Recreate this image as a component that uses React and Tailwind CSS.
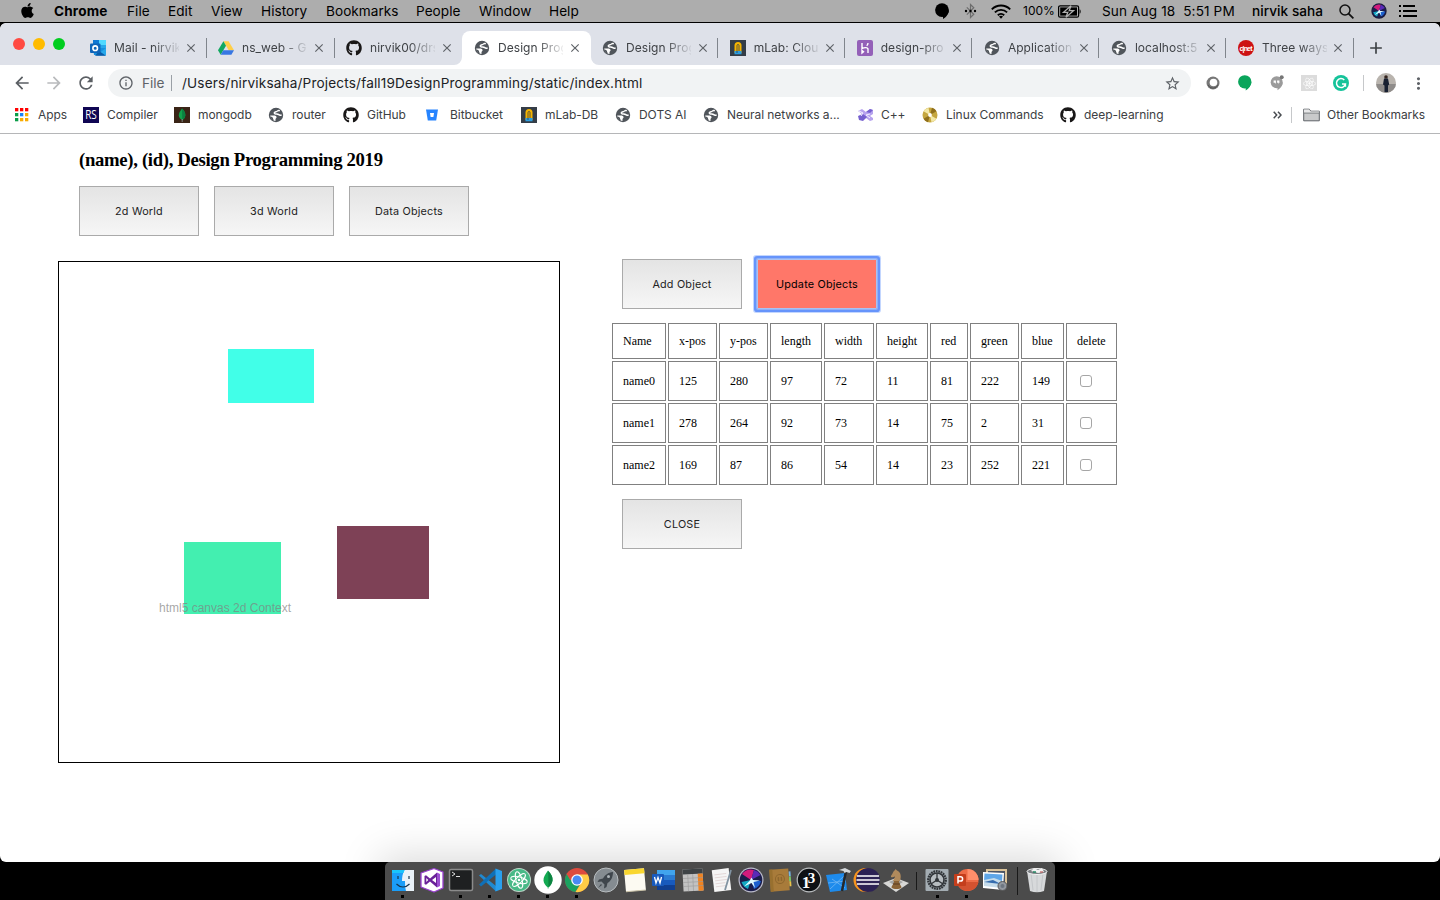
import React from "react";
import { FaApple, FaGithub, FaReact } from "react-icons/fa";
import { MdStarBorder, MdArrowBack, MdArrowForward, MdRefresh, MdInfoOutline, MdClose, MdAdd, MdMoreVert } from "react-icons/md";

const sans = "font-['Inter','Liberation_Sans',sans-serif]";
const serif = "font-['Liberation_Serif',serif]";

/* ---------- small icons ---------- */
const Globe = () => (
  <svg width="16" height="16" viewBox="0 0 16 16">
    <circle cx="8" cy="8" r="7.200" fill="#50555b" />
    <path d="M11.800 3.700C9.800 2.800 9.700 4.500 8 4.700c-1.600.2-2.300 1.500-1 2.100 1.500.5 2.700-.2 3.700.8.700.8 1.800.7 2.900.4" stroke="#fff" strokeWidth="1.500" fill="none" />
    <path d="M2.200 8.600h3.400c1.800 0 3 .5 3 1.700 0 1-1.100 1-1.100 2v1.800A6.200 6.200 0 0 1 2.200 8.600z" fill="#fff" />
    <path d="M1.800 9.900c1.500-.2 2.900.2 3.100 1.100.2.800 1 1.700.6 3.400z" fill="#50555b" />
  </svg>
);
const Outlook = () => (
  <svg width="16" height="16" viewBox="0 0 16 16">
    <path d="M4 0h11a1 1 0 0 1 1 1v7H3V1a1 1 0 0 1 1-1z" fill="#28a8ea" />
    <path d="M9 0h7v5H9z" fill="#50d9ff" /><path d="M3 0h6v5H3z" fill="#0f78d4" />
    <path d="M3 8h13v7H4z" fill="#1490df" /><path d="M16 8v7.500H6z" fill="#28a8ea" /><path d="m9 11 7 4.700H5z" fill="#0a5ba8" />
    <rect y="3.500" width="10.500" height="9.500" rx="1" fill="#0f64b8" /><circle cx="5.200" cy="8.200" r="2.300" fill="none" stroke="#fff" strokeWidth="1.600" />
  </svg>
);
const Drive = () => (
  <svg width="16" height="16" viewBox="0 0 16 16">
    <path d="M5.400 1.200h5.200L16 10.200h-5.300z" fill="#ffcf48" /><path d="M5.400 1.200 8 5.700 2.700 14.800 0 10.200z" fill="#11a861" /><path d="M5.300 10.200H16l-2.600 4.600H2.700z" fill="#3777e3" />
  </svg>
);
const MLab = () => (
  <svg width="16" height="16" viewBox="0 0 16 16">
    <path fill="#343d47" d="M0 0h16v16H0z" /><path d="M4.500 13V5.500a3.500 3.500 0 0 1 7 0V13z" fill="#f5b400" /><path d="M4.500 11h7v3.300h-7z" fill="#2d9ee0" /><path d="M7 13V5.500a1 1 0 0 1 2 0V11" stroke="#343d47" strokeWidth=".8" fill="none" />
  </svg>
);
const Heroku = () => (
  <svg width="16" height="16" viewBox="0 0 16 16">
    <rect width="16" height="16" rx="2" fill="#9460b8" /><path d="M5 3v5.500c2-1 6-1.500 6 .8V13M5 10.500V13l1.500-1.200zM11 3c0 1-.5 2-1.300 2.700" stroke="#fff" strokeWidth="1.400" fill="none" />
  </svg>
);
const Cnet = () => (
  <svg width="16" height="16" viewBox="0 0 16 16">
    <circle cx="8" cy="8" r="8" fill="#cd1212" /><text x="8" y="10.500" fontSize="7" textAnchor="middle" fill="#fff" fontFamily="Liberation Sans" fontWeight="700" textLength="13">c|net</text>
  </svg>
);
const Apps = () => (
  <svg width="14" height="14" viewBox="0 0 14 14">
    {["#f00", "#f00", "#f00", "#0a9d48", "#1a82f7", "#f9ab00", "#0a9d48", "#f9ab00", "#f9ab00"].map((c, i) => (
      <rect key={i} x={(i % 3) * 5} y={Math.floor(i / 3) * 5} width="3.300" height="3.300" fill={c} />
    ))}
  </svg>
);
const RS = () => (
  <svg width="16" height="16" viewBox="0 0 16 16"><path fill="#100653" d="M0 0h16v16H0z" /><text x="8" y="12.200" fontSize="12" textAnchor="middle" fill="#fff" fontFamily="Open Sans" textLength="11.500" lengthAdjust="spacingAndGlyphs">RS</text></svg>
);
const MongoSm = () => (
  <svg width="16" height="16" viewBox="0 0 16 16"><path fill="#3a2416" d="M0 0h16v16H0z" /><path d="M8 1.500c2.500 2.500 3.500 4.500 3.300 7-.2 2-1.500 3.500-3 4.500-2-1-3.400-2.600-3.500-4.600C4.700 6 6 4.200 8 1.500z" fill="#12a14b" /><path d="M8 1.500c2.500 2.500 3.500 4.500 3.300 7-.2 2-1.500 3.500-3 4.500z" fill="#0b8040" /><path d="M8.200 12v3" stroke="#9aa" strokeWidth=".7" /></svg>
);
const Bitbucket = () => (
  <svg width="14" height="14" viewBox="0 0 14 14"><path d="M1 1.500h12l-1.800 11H2.800z" fill="#2684ff" /><path d="M5 5h4l-.6 4H5.600z" fill="#fff" /></svg>
);
const Cpp = () => (
  <svg width="17" height="16" viewBox="0 0 17 16"><path d="m1 4 4-2 4 3 4-3 3 1v4l-3 2 3 2v2l-3 1-4-3-4 2-3-1V9l3-2z" fill="#b7a3ee" /><path d="m1 9 5-2 4 3-4 4-4-1zM9 5l4-3 3 1-3 3z" fill="#7660cf" /><path d="m2 4 4 2-2 3m9-2-4 1 4 3" stroke="#f3efff" fill="none" /></svg>
);
const Disc = () => (
  <svg width="16" height="16" viewBox="0 0 16 16"><circle cx="8" cy="8" r="7.500" fill="#c5a63f" /><path d="M8 8 1.500 4.200A7.500 7.500 0 0 1 6.500.7zM8 8l6.500 3.800a7.500 7.500 0 0 1-5 3.500z" fill="#f3e8a6" /><path d="M8 8 10 .8a7.500 7.500 0 0 1 4.500 3.500zM8 8 6 15.200a7.500 7.500 0 0 1-4.500-3.500z" fill="#8f6f1c" /><circle cx="8" cy="8" r="1.900" fill="#fff" /></svg>
);
const Folder = () => (
  <svg width="17" height="14" viewBox="0 0 17 14"><path d="M.7 12.800V1.200h5.600l1.500 2h8.500v9.600z" fill="#c9cacb" stroke="#5f6368" /><path d="M1 4.800h15V3.600H7.500l-1.400-2H1z" fill="#e7e7e8" /><path d="M1 5.100h15" stroke="#5f6368" strokeWidth=".7" /></svg>
);
const Bubble = ({ size = 14, fill = "#000" }) => (
  <svg width={size} height={size * 1.15} viewBox="0 0 14 16"><circle cx="7" cy="7" r="6.900" fill={fill} /><path d="M13.900 7c0 4-2.900 7.300-5.900 9v-2.500l-1-.5z" fill={fill} /></svg>
);
const Bluetooth = () => (
  <svg width="13" height="16" viewBox="0 0 13 16"><path d="m2.800 4.300 7 7L6.500 14.500v-13l3.300 3.200-7 7" stroke="#6d6d6d" strokeWidth="1.200" fill="none" /><circle cx="2" cy="8" r="1.200" /><circle cx="6.500" cy="8" r="1.200" /><circle cx="11" cy="8" r="1.200" /></svg>
);
const Wifi = () => (
  <svg width="20" height="15" viewBox="0 0 20 15" fill="none" stroke="#000" strokeWidth="1.900"><path d="M.8 5.300a13 13 0 0 1 18.400 0M3.900 8.400a8.700 8.700 0 0 1 12.200 0M6.800 11.200a4.700 4.700 0 0 1 6.400 0" /><path d="m10 14.800-2-2.200a3 3 0 0 1 4 0z" fill="#000" stroke="none" /></svg>
);
const Battery = () => (
  <svg width="24" height="13" viewBox="0 0 24 13"><rect x=".6" y=".8" width="20" height="11.400" rx="1.500" fill="none" stroke="#000" strokeWidth="1.200" /><path d="M2.200 2.400h16.800v8.200H2.200z" /><path d="M21.600 4.200c1.400.4 1.400 4.200 0 4.600z" /><path d="m13 .8-7.500 6.500h4.300L8 12.200l7.500-6.500h-4.300z" fill="#000" stroke="#b0b0b0" strokeWidth="1.300" /></svg>
);
const SiriArt = ({ size, rim = "#bcbccb" }) => (
  <svg width={size} height={size} viewBox="0 0 26 26">
    <circle cx="13" cy="13" r="12.500" fill={rim} /><circle cx="13" cy="13" r="11.300" fill="#1b1d4a" />
    <path d="M13 13 4 7a11 11 0 0 1 12-4z" fill="#d21b7c" /><path d="m13 13 3-10a11 11 0 0 1 6.500 5z" fill="#5a2ab8" /><path d="m13 13 10 1A11 11 0 0 1 16 22z" fill="#1a5fcf" /><path d="M13 13 3.500 15A11 11 0 0 0 10 22z" fill="#12a9c4" />
    <path d="m13.500 10.500 1.500 2.500 7 .5-6.500 1.500 1.500 6-3.500-5-7.500 3.500 5.500-5.500z" fill="#dffbff" />
  </svg>
);
const List = () => (
  <svg width="19" height="12" viewBox="0 0 19 12" stroke="#000" strokeWidth="2"><path d="M0 1h2M0 6h2M0 11h2M4 1h12M4 6h14M4 11h14" /></svg>
);

/* ---------- menu bar ---------- */
function MenuBar() {
  const items = [["File", "w-[41px]"], ["Edit", "w-[43px]"], ["View", "w-[50px]"], ["History", "w-[65px]"], ["Bookmarks", "w-[90px]"], ["People", "w-[63px]"], ["Window", "w-[70px]"], ["Help", "w-[40px]"]];
  return (
    <div className={`flex h-[23px] shrink-0 items-center whitespace-nowrap border-b border-black bg-[#adadad] pl-[20px] text-[13.600px] text-black ${sans}`}>
      <FaApple className="mb-[2px] h-[17px] w-[15px]" />
      <span className="ml-[19px] w-[73px] font-bold tracking-[0.150px]">Chrome</span>
      {items.map(([t, w]) => <span key={t} className={`${w} tracking-[0.040px]`}>{t}</span>)}
      <div className="ml-[346px] flex w-[29px]"><Bubble size={14} /></div>
      <div className="flex w-[27px]"><Bluetooth /></div>
      <div className="flex w-[32px]"><Wifi /></div>
      <span className="w-[35px] text-[12px]">100%</span>
      <div className="w-[44px]"><Battery /></div>
      <span className="w-[150px] whitespace-pre tracking-[0.120px]">Sun Aug 18  5:51 PM</span>
      <span className="w-[87px] font-medium tracking-[0.050px]">nirvik saha</span>
      <svg width="15" height="15" viewBox="0 0 15 15" fill="none" stroke="#111" strokeWidth="1.500"><circle cx="6" cy="6" r="5" /><path d="m9.600 9.600 4.800 4.800" strokeWidth="1.800" /></svg>
      <div className="ml-[17px]"><SiriArt size={16} rim="#1b1d3a" /></div>
      <div className="ml-[12px]"><List /></div>
    </div>
  );
}

/* ---------- tab strip ---------- */
function Tab({ icon, title, active, sep, w = "w-[127.200px]" }) {
  return (
    <div className={`relative flex h-[34px] shrink-0 items-center ${w} ${active ? "ml-[-1px] rounded-t-[8px] bg-white pl-[12.500px]" : "pl-[11.500px]"}`}>
      {active && <svg className="absolute bottom-0 left-[-8px]" width="8" height="8"><path d="M8 0v8H0a8 8 0 0 0 8-8z" fill="#fff" /></svg>}
      {active && <svg className="absolute bottom-0 right-[-8px]" width="8" height="8"><path d="M0 0v8h8a8 8 0 0 1-8-8z" fill="#fff" /></svg>}
      <span className="flex h-4 w-4 shrink-0 items-center">{icon}</span>
      <span className="ml-[8px] w-[65px] shrink-0 whitespace-nowrap text-[12px] tracking-[0.050px] text-[#3f4246] [mask-image:linear-gradient(to_right,#000_60%,transparent_104%)]">{title}</span>
      <MdClose className="ml-[4.500px] h-[14px] w-[14px] shrink-0 text-[#5f6368]" />
      {sep && <span className="absolute right-0 top-[7px] h-[20px] w-px bg-[#80858c]" />}
    </div>
  );
}
function TabStrip() {
  return (
    <div className="flex h-[42px] items-end rounded-t-[6px] bg-[#dee1e9]">
      <div className="mb-[15px] ml-[13px] flex w-[65.500px] gap-[8px]">
        <span className="h-3 w-3 rounded-full bg-[#ff4a42]" /><span className="h-3 w-3 rounded-full bg-[#ffbb00]" /><span className="h-3 w-3 rounded-full bg-[#00cd1f]" />
      </div>
      <Tab w="w-[128px]" icon={<Outlook />} title="Mail - nirvik" sep />
      <Tab w="w-[128px]" icon={<Drive />} title="ns_web - G" sep />
      <Tab w="w-[128px]" icon={<FaGithub className="h-4 w-4 text-[#191717]" />} title="nirvik00/drs" />
      <Tab w="w-[129px]" icon={<Globe />} title="Design Prog" active />
      <Tab w="w-[127.700px]" icon={<Globe />} title="Design Prog" sep />
      <Tab w="w-[127px]" icon={<MLab />} title="mLab: Clou" sep />
      <Tab icon={<Heroku />} title="design-pro" sep />
      <Tab w="w-[127px]" icon={<Globe />} title="Application" sep />
      <Tab w="w-[127px]" icon={<Globe />} title="localhost:5" sep />
      <Tab icon={<Cnet />} title="Three ways" sep />
      <MdAdd className="mb-[7px] ml-[12.500px] h-[20px] w-[20px] text-[#3c4043]" />
    </div>
  );
}

/* ---------- toolbar ---------- */
function Toolbar() {
  return (
    <div className={`flex h-[36px] items-center pl-[12px] ${sans}`}>
      <MdArrowBack className="h-5 w-5 text-[#5b5f64]" />
      <MdArrowForward className="ml-[12px] h-5 w-5 text-[#b9bbbd]" />
      <MdRefresh className="ml-[12px] h-5 w-5 text-[#5b5f64]" />
      <div className="ml-[12px] flex h-[28px] w-[1083px] items-center rounded-full bg-[#f1f3f4] pl-[10px] pr-[10px] text-[13.600px] text-[#202124]">
        <MdInfoOutline className="h-4 w-4 text-[#5f6368]" />
        <span className="ml-[8px] w-[29px] text-[#5f6368]">File</span>
        <span className="h-4 w-px bg-[#9aa0a6]" />
        <span className="ml-[10px] flex-1 whitespace-nowrap tracking-[0.160px]">/Users/nirviksaha/Projects/fall19DesignProgramming/static/index.html</span>
        <MdStarBorder className="h-[17px] w-[17px] text-[#5f6368]" />
      </div>
      <svg className="ml-[15px]" width="14" height="14" viewBox="0 0 14 14"><circle cx="7" cy="7" r="6.500" fill="#777" /><circle cx="7.500" cy="6.500" r="3.800" fill="#fff" /><path d="M2 9a5.500 5.500 0 0 0 10 0" stroke="#555" fill="none" /></svg>
      <div className="ml-[18px]"><Bubble size={13.500} fill="#0aa55b" /></div>
      <svg className="ml-[18.500px]" width="14" height="16" viewBox="0 0 14 16"><circle cx="6.700" cy="7.200" r="6" fill="#9b9b9b" /><path d="M12.700 7.200c0 3.500-2.700 6.500-5.200 8v-2.400z" fill="#9b9b9b" /><path d="M3.600 5.500h2.300v2.300L5 9V7.800H3.600zM7.100 5.500h2.300v2.300L8.500 9V7.800H7.100z" fill="#fff" /><circle cx="11.700" cy="2.200" r="2" fill="#777" /></svg>
      <div className="ml-[17px] flex h-4 w-4 items-center justify-center bg-[#dcdcdc]"><FaReact className="h-[13px] w-[13px] text-white" /></div>
      <svg className="ml-[16px]" width="16" height="16" viewBox="0 0 16 16"><circle cx="8" cy="8" r="8" fill="#15c39a" /><path d="M11.300 5A4.500 4.500 0 1 0 12.400 9H9M12.400 9v2.700" stroke="#fff" strokeWidth="1.500" fill="none" /></svg>
      <span className="ml-[14px] h-4 w-px bg-[#c6c8ca]" />
      <svg className="ml-[12px]" width="20" height="20" viewBox="0 0 20 20"><defs><clipPath id="av"><circle cx="10" cy="10" r="10" /></clipPath></defs><g clipPath="url(#av)"><path fill="#b9b4ae" d="M0 0h20v20H0z" /><path fill="#8f8c8a" d="M0 11h20v9H0z" /><circle cx="10" cy="4" r="1.800" fill="#33241e" /><path d="M8 5.500h4l1.200 6-1.200 1V19H8.500v-6.500L7 11.500z" fill="#182031" /></g></svg>
      <MdMoreVert className="ml-[13px] h-[19px] w-[19px] text-[#5f6368]" />
    </div>
  );
}

function Bookmarks() {
  const gh = <FaGithub className="h-4 w-4 text-[#191717]" />;
  const items = [
    [<Apps />, "Apps", "w-[68px]", "w-[23px]"],
    [<RS />, "Compiler", "w-[91px]", "w-[24px]"],
    [<MongoSm />, "mongodb", "w-[94px]", "w-[24px]"],
    [<Globe />, "router", "w-[75px]", "w-[24px]"],
    [gh, "GitHub", "w-[82px]", "w-[24px]"],
    [<Bitbucket />, "Bitbucket", "w-[96px]", "w-[25px]"],
    [<MLab />, "mLab-DB", "w-[94px]", "w-[24px]"],
    [<Globe />, "DOTS AI", "w-[88px]", "w-[24px]"],
    [<Globe />, "Neural networks a...", "w-[154px]", "w-[24px]"],
    [<Cpp />, "C++", "w-[65px]", "w-[24px]"],
    [<Disc />, "Linux Commands", "w-[138px]", "w-[24px]"],
    [gh, "deep-learning", "w-[213px]", "w-[24px]"],
  ];
  return (
    <div className={`flex h-[33px] items-center whitespace-nowrap border-b border-[#b5b6b8] pb-[4px] pl-[15px] text-[12px] tracking-[-0.050px] text-[#3c4043] ${sans}`}>
      {items.map(([ic, t, w, iw]) => (
        <div key={t} className={`flex shrink-0 items-center ${w}`}><span className={`shrink-0 ${iw}`}>{ic}</span><span>{t}</span></div>
      ))}
      <svg width="9" height="8" viewBox="0 0 9 8" fill="none" stroke="#4a4e52" strokeWidth="1.500"><path d="m.7.700 3 3.300-3 3.300M5 .7 8 4 5 7.300" /></svg>
      <span className="ml-[9px] h-4 w-px bg-[#c6c8ca]" />
      <div className="ml-[11px] w-[24px]"><Folder /></div>
      <span>Other Bookmarks</span>
    </div>
  );
}

/* ---------- page ---------- */
function Btn({ children }) {
  return <button className={`h-[50px] w-[120px] border border-[#aaa] bg-linear-to-b from-[#e4e4e4] to-[#f6f6f6] pt-[2px] text-[10.800px] tracking-[0.200px] text-[#222] ${sans}`}>{children}</button>;
}
const cols = ["w-[54px]", "w-[49px]", "w-[49px]", "w-[52px]", "w-[50px]", "w-[52px]", "w-[38px]", "w-[49px]", "w-[43px]", "w-[51px]"];
const rows = [
  ["Name", "x-pos", "y-pos", "length", "width", "height", "red", "green", "blue", "delete"],
  ["name0", 125, 280, 97, 72, 11, 81, 222, 149, null],
  ["name1", 278, 264, 92, 73, 14, 75, 2, 31, null],
  ["name2", 169, 87, 86, 54, 14, 23, 252, 221, null],
];
function Table() {
  return (
    <div className={`mt-[14px] flex flex-col gap-[2px] text-[12px] text-black ${serif}`}>
      {rows.map((r, i) => (
        <div key={i} className={`flex gap-[2px] ${i ? "h-[40px]" : "h-[36px]"}`}>
          {r.map((c, j) => (
            <div key={j} className={`flex shrink-0 items-center whitespace-nowrap border border-[#808080] pl-[10px] ${cols[j]}`}>
              {c === null ? <span className="ml-[3px] h-[12px] w-[12px] rounded-[3px] border border-[#a6a6a6] bg-white" /> : c}
            </div>
          ))}
        </div>
      ))}
    </div>
  );
}
function Page() {
  return (
    <div className="flex flex-1 flex-col">
      <h3 className={`ml-[79px] mt-[15px] h-[22px] whitespace-nowrap text-[18.720px] font-bold leading-[22px] tracking-[-0.320px] text-black ${serif}`}>(name), (id), Design Programming 2019</h3>
      <div className="ml-[79px] mt-[15px] flex gap-[15px]"><Btn>2d World</Btn><Btn>3d World</Btn><Btn>Data Objects</Btn></div>
      <div className="ml-[58px] mt-[23px] flex">
        <div className="relative mt-[2px] h-[502px] w-[502px] shrink-0 border border-black">
          <div className="absolute left-[169px] top-[87px] h-[54px] w-[86px] bg-[#41ffe8]" />
          <div className="absolute left-[125px] top-[280px] h-[72px] w-[97px] bg-[#43efb0]" />
          <div className="absolute left-[278px] top-[264px] h-[73px] w-[92px] bg-[#7e4156]" />
          <span className="absolute left-[100px] top-[338px] whitespace-nowrap font-['Liberation_Sans',sans-serif] text-[12px] leading-[16px] text-[#808080]/70">html5 canvas 2d Context</span>
        </div>
        <div className="ml-[52px] flex flex-col">
          <div className="ml-[10px] flex gap-[15px]">
            <Btn>Add Object</Btn>
            <button className={`h-[50px] w-[120px] border border-[#a9c2f2] bg-[#ff7769] pt-[2px] text-[10.800px] tracking-[0.200px] text-black shadow-[0_0_0_1px_#8fb0f6,0_0_0_3px_#6694fb,0_0_0_4px_#c3d6fe] rounded-[1px] ${sans}`}>Update Objects</button>
          </div>
          <Table />
          <div className="ml-[10px] mt-[14px]"><Btn>CLOSE</Btn></div>
        </div>
      </div>
    </div>
  );
}

/* ---------- dock ---------- */
const S = ({ children }) => <svg width="26" height="26" viewBox="0 0 26 26">{children}</svg>;
const dock = [
  [<S><path d="M2 3h22v21H2z" fill="#e8f1f8" /><path d="M2 3h12.500c-2 4-2.500 7-2.500 11h3c0 4 .3 7 1 10H2z" fill="#1a9df8" /><path d="M2 3h12.500l-1 3H2z" fill="#19c4fb" /><path d="M8 9v3M19 9v3M6.500 17c4 4 9 4 13 0" stroke="#15344f" strokeWidth="1.200" fill="none" /></S>, 1],
  [<S><path d="M15 1.500 24 5v16l-9 4L2 20V6z" fill="#fff" stroke="#9a3fd0" strokeWidth="1.300" strokeLinejoin="round" /><path d="M18 5.500 21 7v12l-3 1.500z" fill="#9b4fd0" /><path d="m5.500 9 1.500-.7 4 3.200L18 5.500v15l-7-6-4 3.200-1.500-.7zM7.300 11v4l2-2zM17 10l-4 3 4 3z" fill="#6a2199" fillRule="evenodd" /></S>],
  [<S><rect x="1.500" y="2.500" width="23" height="21" rx="1.500" fill="#1e2021" stroke="#8b8b8b" strokeWidth="1.500" /><path d="m4 5 3 2-3 2M8 9.500h4" stroke="#ddd" fill="none" /></S>, 1],
  [<S><path d="M2 8.500 4 7l15 12v5.500z" fill="#1f8ad2" /><path d="M19 1.500V7.500L4 19.500 2 17.500z" fill="#0f70b8" /><path d="M18.500 1.500 25 4v18l-6.500 2.500z" fill="#2aa0ee" /></S>, 1],
  [<S><circle cx="13" cy="13" r="12" fill="#bdd8ca" /><circle cx="13" cy="13" r="11" fill="#48b987" /><g stroke="#fff" fill="none"><ellipse cx="13" cy="13" rx="8.500" ry="3" transform="rotate(15 13 13)" /><ellipse cx="13" cy="13" rx="8.500" ry="3" transform="rotate(75 13 13)" /><ellipse cx="13" cy="13" rx="8.500" ry="3" transform="rotate(135 13 13)" /></g><circle cx="13" cy="13" r="1.300" fill="#fff" /></S>, 1],
  [<svg width="28" height="28" viewBox="0 0 28 28"><circle cx="14" cy="14" r="13.700" fill="#fff" /><path d="M14 4.500c3.500 4 4.800 6.500 4.500 10-.4 3-1.800 5-4 6.800v1.200h-.8v-1.200C11.500 19.500 9.700 17.500 9.500 14.500c-.2-3.500 1.700-6 4.500-10z" fill="#13aa52" /><path d="M14.200 4.700c3.400 4 4.600 6.300 4.300 9.800-.4 3-1.800 5-4 6.800z" fill="#0d8441" /></svg>, 1],
  [<S><circle cx="13" cy="13" r="12" fill="#dd4b3e" /><path d="M2.600 7A12 12 0 0 0 11.500 25l5.300-9L13 13H6.200z" fill="#1ba260" /><path d="M13 7.500h10.800A12 12 0 0 1 11.500 25l6-9.500z" fill="#ffcd46" /><circle cx="13" cy="13" r="5.800" fill="#fff" /><circle cx="13" cy="13" r="4.500" fill="#4a8af4" /></S>, 1],
  [<S><circle cx="13" cy="13" r="12" fill="#858c91" stroke="#b8bdc0" /><path d="M20 5c-5 .5-8 3-10 6.500l-4 1L4.500 15l4-.5 3 3-.5 4 2.500-1.500 1-4C18 14 20 10 20 5z" fill="#3f464c" /><circle cx="15.500" cy="9.500" r="1.500" fill="#aeb5b9" /><path d="m8 17-3 4 4-3z" fill="#3f464c" /></S>],
  [<S><g transform="rotate(-5 13 13)"><path d="M3 2h20v22H3z" fill="#fcfaf2" /><path d="M3 2h20v5H3z" fill="#f9d62f" /><path d="M3 24h20" stroke="#c9c2a8" /></g></S>],
  [<S><path d="M6 3h18v20H6z" fill="#2b7cd3" /><path d="M6 3h18v5H6z" fill="#41a5ee" /><path d="M6 13h18v5H6z" fill="#185abd" /><path d="M6 18h18v5H6z" fill="#103f91" /><rect x="1" y="7" width="12" height="12" rx="1" fill="#185abd" /><path d="m3.500 10 1.500 6 2-5.500L9 16l1.500-6" stroke="#fff" strokeWidth="1.300" fill="none" /></S>],
  [<S><g transform="rotate(-3 13 13)"><path d="M3 2h20v22H3z" fill="#c2c2c2" /><path d="M3 2h20v5H3z" fill="#3e4346" /><path d="M18 7h5v17h-5z" fill="#f08321" /><path d="M3 11h20M3 15h20M3 19h20M8 7v17M13 7v17" stroke="#999" strokeWidth=".6" /></g></S>],
  [<S><g transform="rotate(-7 13 13)"><path d="M4 2h17v22H4z" fill="#f5f5f5" /><path d="M6 7h12M6 10h12M6 13h12M6 16h10M6 19h10" stroke="#dcc" strokeWidth=".7" /></g><path d="m22 3-6 20" stroke="#8294a2" strokeWidth="1.800" /></S>],
  [<SiriArt size={26} />],
  [<S><g transform="rotate(-4 13 13)"><path d="M22 5h2v5h-2z" fill="#76b5e8" /><path d="M22 10h2v5h-2z" fill="#7cc66a" /><path d="M22 15h2v5h-2z" fill="#eac34a" /><path d="M3 2h19v22H3z" fill="#a87b3a" /><path d="M3 2h3v22H3z" fill="#98702f" /><circle cx="13" cy="12" r="4.500" fill="none" stroke="#8d662d" /><path d="M11.500 10v4M14.500 10v4" stroke="#8d662d" strokeWidth="1.500" /></g></S>],
  [<S><circle cx="13" cy="13" r="11.800" fill="#0e1114" stroke="#b9bcbe" strokeWidth="1.200" /><text x="10" y="20.500" fontSize="17" fill="#fff" textAnchor="middle" fontWeight="700" fontFamily="Liberation Serif">1</text><text x="15.500" y="15.500" fontSize="15" fill="#fff" textAnchor="middle" fontWeight="700" fontFamily="Liberation Serif">3</text></S>],
  [<S><path d="m1 8 19-2 2 17-17 2z" fill="#1e8bec" /><path d="m5 22 14-13M7 12l13 9M3 16l18-2" stroke="#7cbcf3" strokeWidth=".7" fill="none" /><path d="m21 4-4 20" stroke="#25282b" strokeWidth="2.500" /><path d="m14 3 6-2 6 3-1.500 2-3-1-2 1-1-2z" fill="#d3d7da" /></S>],
  [<svg width="28" height="26" viewBox="0 0 28 26"><circle cx="12.500" cy="13" r="12" fill="#f7941e" /><circle cx="15" cy="13" r="12" fill="#2c2255" /><path d="M4 9h22M3.500 13h23M4 17h22" stroke="#fff" strokeWidth="1.700" /></svg>],
  [<S><path d="m0 16 13-5 13 5-13 9z" fill="#d8d8d6" /><path d="m6 15 7-3 7 3-7 4z" fill="#a5a5a3" /><path d="M8.500 20.500c0-2 2.500-3 2.500-7h5c0 4 2.500 5 2.500 7-2 2-8 2-10 0z" fill="#8a6336" /><path d="M10 14c.5-2 2-3 2-4.500-1.500 0-2.500 1.500-4 .500-.6-1.500 1.500-2.500 2-4.500C10.500 4 12 3.500 12.500 2l1.500 1.500C18 5 18.500 9.500 17 14z" fill="#b08a5c" /><path d="M10 17h7" stroke="#5b3d20" /></S>],
];
const dockRight = [
  [<S><rect x="1.500" y="2" width="23" height="22" rx="1" fill="#a4adb3" /><circle cx="13" cy="13" r="8.800" fill="none" stroke="#303438" strokeWidth="2.200" strokeDasharray="1.800 .7" /><circle cx="13" cy="13" r="7" fill="#b6bcc0" stroke="#303438" strokeWidth="1.600" /><path d="M13 13V6M13 13l6 4M13 13l-6 4" stroke="#303438" strokeWidth="1.300" /><circle cx="13" cy="13" r="2" fill="#303438" /></S>, 1],
  [<S><circle cx="14.500" cy="13" r="11" fill="#ed6c47" /><path d="M14.500 2a11 11 0 0 1 11 11h-11z" fill="#ff8f6b" /><path d="M4 15h21.500A11 11 0 0 1 5 18z" fill="#d35230" /><rect x="1" y="7" width="12" height="12" rx="1" fill="#c43e1c" /><path d="M5 16.500V9.800h2.500a2 2 0 0 1 0 4.200H5" stroke="#fff" strokeWidth="1.500" fill="none" /></S>, 1],
  [<S><path d="M4 2h21v17H4z" fill="#dac39a" /><path d="M6 4h17v13H6z" fill="#4c5666" /><path d="m1 5 21 1-1 17-20-2z" fill="#fff" /><path d="m2.500 6.500 18 1-.5 7-18-1z" fill="#5fa6e7" /><path d="m2 13 10-2 8 3v7L2 19z" fill="#c6dcea" /><path d="m2 15 9-2 8 4-9-1z" fill="#356cae" /><circle cx="20.500" cy="19" r="4.500" fill="#9298a0" stroke="#555" /><circle cx="20.500" cy="19" r="2" fill="#6d7681" /></S>],
];
function DockItem({ icon, dot }) {
  return (
    <div className="flex w-[29px] shrink-0 flex-col items-center">
      <div className="flex h-[27px] items-center">{icon}</div>
      {dot && <span className="mt-[2px] h-[3px] w-[3px] bg-black" />}
    </div>
  );
}
function Dock() {
  return (
    <div className="relative z-10 flex h-[38px] w-[670px] rounded-t-[5px] bg-[#4b4b4b] pl-[3px] pt-[4px]">
      {dock.map(([ic, d], i) => <DockItem key={i} icon={ic} dot={d} />)}
      <span className="ml-[6px] mt-[6px] h-[18px] w-px bg-[#191919]" />
      <div className="ml-[5.500px] flex">{dockRight.map(([ic, d], i) => <DockItem key={i} icon={ic} dot={d} />)}</div>
      <span className="ml-[7px] mt-px h-[28px] w-px bg-[#191919]" />
      <div className="ml-[6px] flex h-[27px] items-center">
        <S><path d="m3 4 20 0-3 20a10 4 0 0 1-14 0z" fill="#d7d9db" /><path d="m7 6 2 17M13 6v19M19 6l-2 17" stroke="#c4c7ca" /><ellipse cx="13" cy="4.500" rx="10" ry="3" fill="#7b7f84" stroke="#f2f2f2" /><path d="m7 4 3-3 4 2 4-2 2 4-6 1z" fill="#f1f1f1" /><path d="M9 5h3" stroke="#258a65" strokeWidth="1.500" /><path d="M16 5h3" stroke="#b34040" /></S>
      </div>
    </div>
  );
}

export default function App() {
  return (
    <div className="flex h-[900px] w-[1440px] flex-col overflow-hidden bg-black">
      <MenuBar />
      <div className="relative flex h-[839px] shrink-0 flex-col overflow-hidden rounded-[6px] bg-white">
        <div className={sans}><TabStrip /></div>
        <Toolbar />
        <Bookmarks />
        <Page />
        <div className="absolute bottom-[-38px] left-[385px] h-[38px] w-[670px] shadow-[0_0_40px_6px_rgba(0,0,0,0.15)]" />
      </div>
      <div className="flex justify-center"><Dock /></div>
    </div>
  );
}
